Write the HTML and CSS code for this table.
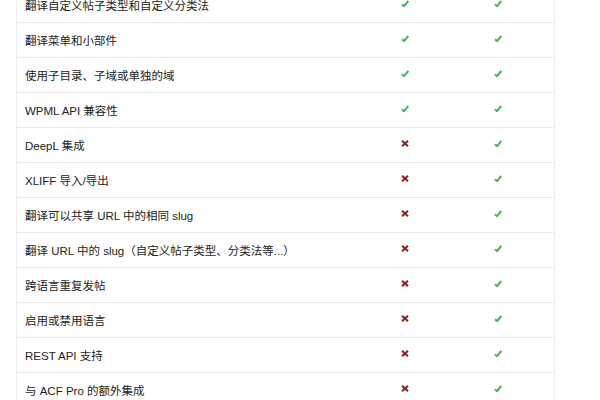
FILE: index.html
```html
<!DOCTYPE html>
<html lang="zh-CN">
<head>
    <meta charset="UTF-8">
    <title>功能比较</title>
    <link rel="stylesheet" href="styles.css">
</head>
<body>
    <div class="compare">
        <div class="row"><span class="name">翻译自定义帖子类型和自定义分类法</span><span class="mark"><svg class="yes" viewBox="0 0 8 7"><path d="M1 4.2 L3 6.2 L7.3 1"/></svg></span><span class="mark"><svg class="yes" viewBox="0 0 8 7"><path d="M1 4.2 L3 6.2 L7.3 1"/></svg></span></div>
        <div class="row"><span class="name">翻译菜单和小部件</span><span class="mark"><svg class="yes" viewBox="0 0 8 7"><path d="M1 4.2 L3 6.2 L7.3 1"/></svg></span><span class="mark"><svg class="yes" viewBox="0 0 8 7"><path d="M1 4.2 L3 6.2 L7.3 1"/></svg></span></div>
        <div class="row"><span class="name">使用子目录、子域或单独的域</span><span class="mark"><svg class="yes" viewBox="0 0 8 7"><path d="M1 4.2 L3 6.2 L7.3 1"/></svg></span><span class="mark"><svg class="yes" viewBox="0 0 8 7"><path d="M1 4.2 L3 6.2 L7.3 1"/></svg></span></div>
        <div class="row"><span class="name">WPML API 兼容性</span><span class="mark"><svg class="yes" viewBox="0 0 8 7"><path d="M1 4.2 L3 6.2 L7.3 1"/></svg></span><span class="mark"><svg class="yes" viewBox="0 0 8 7"><path d="M1 4.2 L3 6.2 L7.3 1"/></svg></span></div>
        <div class="row"><span class="name">DeepL 集成</span><span class="mark"><svg class="no" viewBox="0 0 8 7"><path d="M1 0.8 L7 6.2 M7 0.8 L1 6.2"/></svg></span><span class="mark"><svg class="yes" viewBox="0 0 8 7"><path d="M1 4.2 L3 6.2 L7.3 1"/></svg></span></div>
        <div class="row"><span class="name">XLIFF 导入/导出</span><span class="mark"><svg class="no" viewBox="0 0 8 7"><path d="M1 0.8 L7 6.2 M7 0.8 L1 6.2"/></svg></span><span class="mark"><svg class="yes" viewBox="0 0 8 7"><path d="M1 4.2 L3 6.2 L7.3 1"/></svg></span></div>
        <div class="row"><span class="name">翻译可以共享 URL 中的相同 slug</span><span class="mark"><svg class="no" viewBox="0 0 8 7"><path d="M1 0.8 L7 6.2 M7 0.8 L1 6.2"/></svg></span><span class="mark"><svg class="yes" viewBox="0 0 8 7"><path d="M1 4.2 L3 6.2 L7.3 1"/></svg></span></div>
        <div class="row"><span class="name">翻译 URL 中的 slug（自定义帖子类型、分类法等...）</span><span class="mark"><svg class="no" viewBox="0 0 8 7"><path d="M1 0.8 L7 6.2 M7 0.8 L1 6.2"/></svg></span><span class="mark"><svg class="yes" viewBox="0 0 8 7"><path d="M1 4.2 L3 6.2 L7.3 1"/></svg></span></div>
        <div class="row"><span class="name">跨语言重复发帖</span><span class="mark"><svg class="no" viewBox="0 0 8 7"><path d="M1 0.8 L7 6.2 M7 0.8 L1 6.2"/></svg></span><span class="mark"><svg class="yes" viewBox="0 0 8 7"><path d="M1 4.2 L3 6.2 L7.3 1"/></svg></span></div>
        <div class="row"><span class="name">启用或禁用语言</span><span class="mark"><svg class="no" viewBox="0 0 8 7"><path d="M1 0.8 L7 6.2 M7 0.8 L1 6.2"/></svg></span><span class="mark"><svg class="yes" viewBox="0 0 8 7"><path d="M1 4.2 L3 6.2 L7.3 1"/></svg></span></div>
        <div class="row"><span class="name">REST API 支持</span><span class="mark"><svg class="no" viewBox="0 0 8 7"><path d="M1 0.8 L7 6.2 M7 0.8 L1 6.2"/></svg></span><span class="mark"><svg class="yes" viewBox="0 0 8 7"><path d="M1 4.2 L3 6.2 L7.3 1"/></svg></span></div>
        <div class="row"><span class="name">与 ACF Pro 的额外集成</span><span class="mark"><svg class="no" viewBox="0 0 8 7"><path d="M1 0.8 L7 6.2 M7 0.8 L1 6.2"/></svg></span><span class="mark"><svg class="yes" viewBox="0 0 8 7"><path d="M1 4.2 L3 6.2 L7.3 1"/></svg></span></div>
    </div>
</body>
</html>
```

FILE: styles.css
```css
body {
    margin: 0;
    background: #fff;
    font-family: "Liberation Sans", "Noto Sans CJK SC", sans-serif;
    font-size: 11.5px;
    color: #222;
    overflow: hidden;
}

.compare {
    width: 537px;
    margin: -12px 0 0 16px;
    border-left: 1px solid #ececec;
    border-right: 1px solid #ececec;
}

.row {
    display: grid;
    grid-template-columns: 341px 93px 93px 1fr;
    align-items: center;
    height: 35px;
    box-sizing: border-box;
    border-bottom: 1px solid #ececec;
}

.name {
    padding-left: 8px;
    white-space: nowrap;
}

.mark {
    display: flex;
    justify-content: center;
    padding-bottom: 3px;
}

.mark svg {
    width: 8px;
    height: 7px;
    fill: none;
    stroke-width: 2;
}

.yes {
    stroke: #4cb05a;
}

.no {
    stroke: #8e1c1c;
}
```
